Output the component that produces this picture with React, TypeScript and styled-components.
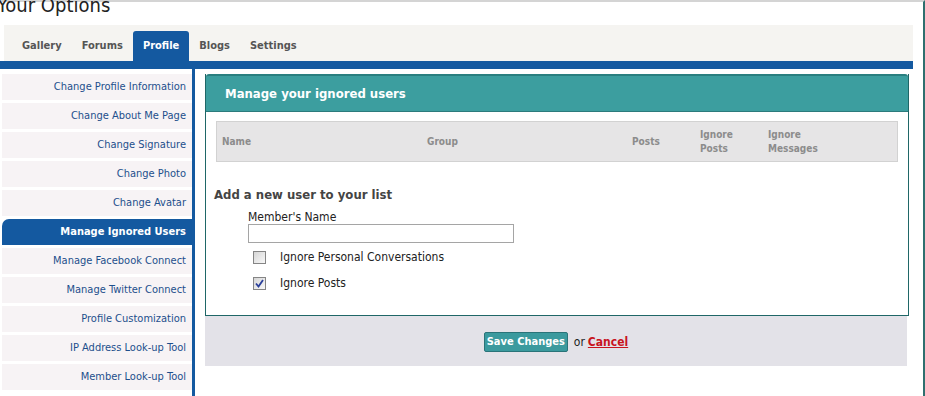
import React from "react";
import styled, { createGlobalStyle } from "styled-components";

const Global = createGlobalStyle`
  html, body { margin: 0; padding: 0; background: #fff; }
  body { font-family: "DejaVu Sans Condensed", "Liberation Sans", sans-serif; }
  * { box-sizing: border-box; }
`;

const Page = styled.div`
  position: relative;
  width: 925px;
  height: 396px;
  overflow: hidden;
  background: #fff;
`;

const Frame = styled.div`
  width: 925px;
  height: 396px;
  border-top: 2px solid #d4d4d4;
  border-right: 2px solid #2f6f6f;
  padding-right: 1px;
  display: flex;
  flex-direction: column;
`;

const Inner = styled.div`
  width: 922px;
  flex: 1;
  display: flex;
  flex-direction: column;
`;

const Title = styled.h1`
  margin: -8px 0 0 -3px;
  height: 31px;
  font-family: "DejaVu Sans Condensed", "Liberation Sans", sans-serif;
  font-weight: normal;
  font-size: 20px;
  line-height: 22px;
  color: #222;
  white-space: nowrap;
`;

const TabBar = styled.div`
  margin-left: 4px;
  width: 909px;
  height: 36px;
  background: #f5f4f1;
  display: flex;
  align-items: flex-end;
  padding-left: 8px;
`;

const Tab = styled.div<{ $active?: boolean }>`
  height: 30px;
  line-height: 30px;
  padding: 0 10px;
  font-weight: bold;
  font-size: 11px;
  color: ${(p) => (p.$active ? "#fff" : "#555")};
  background: ${(p) => (p.$active ? "#1459a0" : "transparent")};
  border-radius: ${(p) => (p.$active ? "3px 3px 0 0" : "0")};
`;

const BlueBar = styled.div`
  width: 913px;
  height: 8px;
  background: #1459a0;
`;

const Body = styled.div`
  flex: 1;
  display: flex;
  gap: 10px;
`;

const Sidebar = styled.nav`
  width: 195px;
  padding: 5px 0 0 2px;
  border-right: 3px solid #1459a0;
  display: flex;
  flex-direction: column;
  gap: 3px;
`;

const SideItem = styled.div<{ $active?: boolean }>`
  height: 26px;
  line-height: 26px;
  text-align: right;
  padding-right: 6px;
  font-size: 11px;
  white-space: nowrap;
  color: ${(p) => (p.$active ? "#fff" : "#1d4f8c")};
  font-weight: ${(p) => (p.$active ? "bold" : "normal")};
  background: ${(p) => (p.$active ? "#1459a0" : "#f7f3f5")};
  border-radius: ${(p) => (p.$active ? "7px 0 0 0" : "0")};
`;

const Main = styled.div`
  width: 704px;
  padding-top: 5px;
  display: flex;
  flex-direction: column;
`;

const Panel = styled.section`
  border: 1px solid #1f6767;
  border-top: none;
  background: #fff;
  height: 242px;
`;

const PanelHead = styled.div`
  height: 38px;
  background: #3c9e9f;
  border-top: 2px solid #2a7f80;
  border-radius: 3px 3px 0 0;
  border-bottom: 1px solid #2c7b7c;
  padding-left: 19px;
  line-height: 35px;
  color: #fff;
  font-weight: bold;
  font-size: 13px;
`;

const TableHead = styled.div`
  margin: 9px 10px 0 10px;
  height: 41px;
  background: #e6e5e6;
  border: 1px solid #d2d2d2;
  display: grid;
  grid-template-columns: 205px 205px 68px 68px 1fr;
  align-items: center;
  padding: 1px 0 0 5px;
`;

const Col = styled.div`
  font-size: 10px;
  font-weight: bold;
  color: #8c8c8c;
  line-height: 14px;
`;

const Form = styled.div`
  padding: 24px 0 0 8px;
  display: flex;
  flex-direction: column;
`;

const FormTitle = styled.div`
  font-size: 13px;
  font-weight: bold;
  color: #444;
  line-height: 18px;
`;

const Field = styled.div`
  margin-left: 34px;
  margin-top: 6px;
  display: flex;
  flex-direction: column;
`;

const FieldLabel = styled.label`
  font-size: 12px;
  color: #222;
  line-height: 14px;
`;

const TextInput = styled.input`
  margin-top: 0;
  width: 266px;
  height: 19px;
  border: 1px solid #a5a5a5;
  padding: 0 3px;
  font-size: 12px;
`;

const CheckRow = styled.div<{ $first?: boolean }>`
  display: flex;
  align-items: center;
  margin-top: ${(p) => (p.$first ? "7px" : "12px")};
  margin-left: 5px;
  height: 14px;
`;

const Box = styled.span`
  width: 13px;
  height: 13px;
  border: 1px solid #858585;
  background: linear-gradient(135deg, #d6d6d6, #f8f8f8);
  display: flex;
  align-items: center;
  justify-content: center;
`;

const CheckLabel = styled.span`
  margin-left: 14px;
  font-size: 12px;
  color: #222;
`;

const Footer = styled.div`
  width: 702px;
  height: 50px;
  background: #e3e2e8;
  display: flex;
  align-items: center;
  justify-content: center;
  gap: 6px;
  padding-top: 1px;
`;

const SaveButton = styled.button`
  width: 84px;
  height: 20px;
  background: #3b9a9e;
  border: 1px solid #2a7479;
  border-radius: 2px;
  color: #fff;
  font-family: inherit;
  font-weight: bold;
  font-size: 11px;
  padding: 0;
`;

const OrText = styled.span`
  font-size: 12px;
  color: #222;
`;

const CancelLink = styled.a`
  font-size: 12px;
  font-weight: bold;
  color: #c8141e;
  text-decoration: underline;
  margin-left: -3px;
`;

const Checkbox = ({ checked }: { checked?: boolean }) => (
  <Box>
    {checked && (
      <svg width="9" height="9" viewBox="0 0 9 9">
        <path d="M1 4.5 L3.5 7.5 L8 1" fill="none" stroke="#2a3f9a" strokeWidth="1.8" />
      </svg>
    )}
  </Box>
);

const sideItems = [
  "Change Profile Information",
  "Change About Me Page",
  "Change Signature",
  "Change Photo",
  "Change Avatar",
  "Manage Ignored Users",
  "Manage Facebook Connect",
  "Manage Twitter Connect",
  "Profile Customization",
  "IP Address Look-up Tool",
  "Member Look-up Tool",
];

export default function App() {
  return (
    <Page>
      <Global />
      <Frame>
        <Inner>
          <Title>Your Options</Title>
          <TabBar>
            <Tab>Gallery</Tab>
            <Tab>Forums</Tab>
            <Tab $active>Profile</Tab>
            <Tab>Blogs</Tab>
            <Tab>Settings</Tab>
          </TabBar>
          <BlueBar />
          <Body>
            <Sidebar>
              {sideItems.map((s) => (
                <SideItem key={s} $active={s === "Manage Ignored Users"}>
                  {s}
                </SideItem>
              ))}
            </Sidebar>
            <Main>
              <Panel>
                <PanelHead>Manage your ignored users</PanelHead>
                <TableHead>
                  <Col>Name</Col>
                  <Col>Group</Col>
                  <Col>Posts</Col>
                  <Col>
                    Ignore
                    <br />
                    Posts
                  </Col>
                  <Col>
                    Ignore
                    <br />
                    Messages
                  </Col>
                </TableHead>
                <Form>
                  <FormTitle>Add a new user to your list</FormTitle>
                  <Field>
                    <FieldLabel>Member's Name</FieldLabel>
                    <TextInput type="text" />
                    <CheckRow $first>
                      <Checkbox />
                      <CheckLabel>Ignore Personal Conversations</CheckLabel>
                    </CheckRow>
                    <CheckRow>
                      <Checkbox checked />
                      <CheckLabel>Ignore Posts</CheckLabel>
                    </CheckRow>
                  </Field>
                </Form>
              </Panel>
              <Footer>
                <SaveButton>Save Changes</SaveButton>
                <OrText>or</OrText>
                <CancelLink href="#">Cancel</CancelLink>
              </Footer>
            </Main>
          </Body>
        </Inner>
      </Frame>
    </Page>
  );
}
